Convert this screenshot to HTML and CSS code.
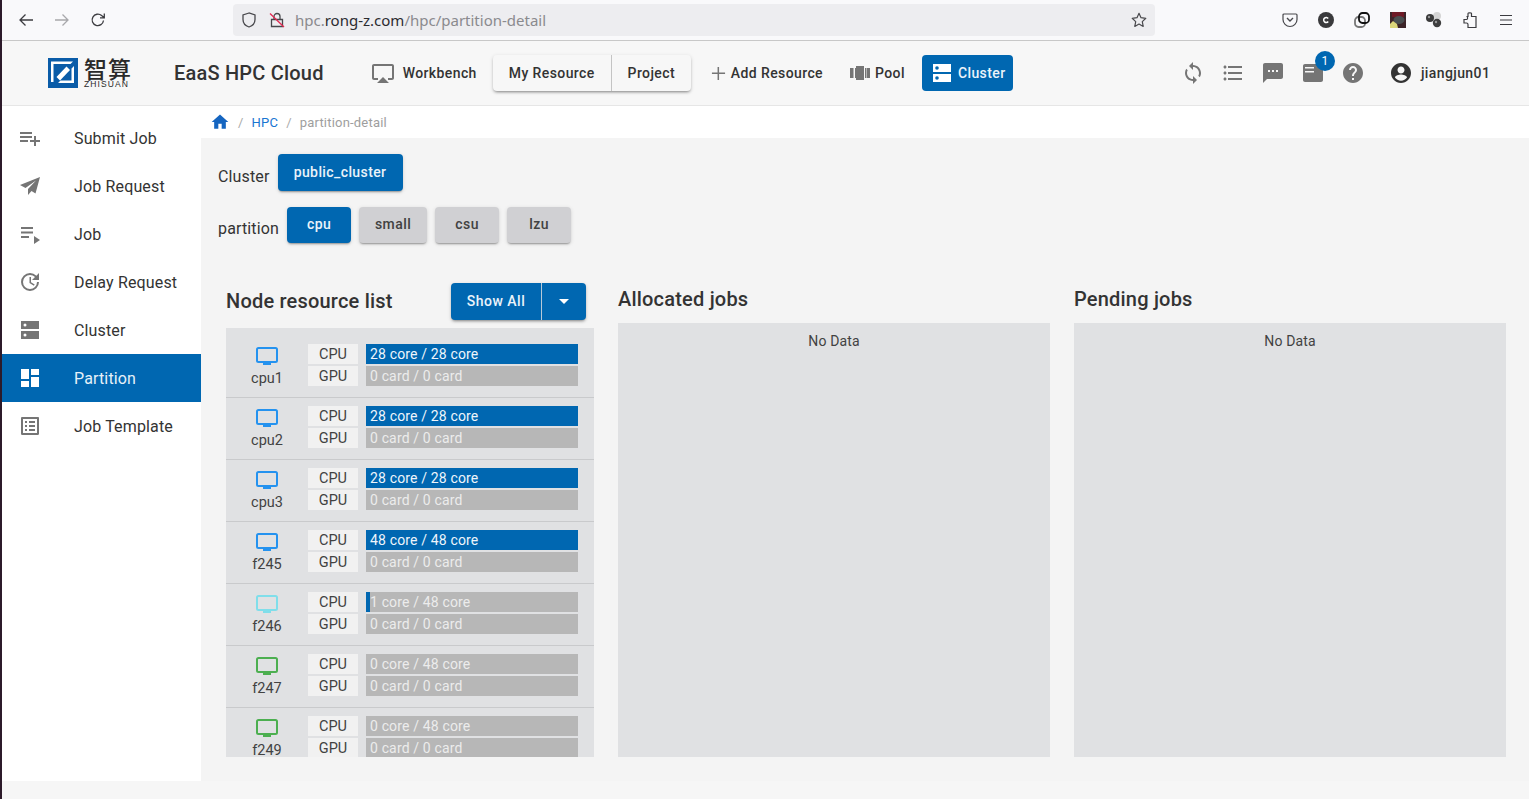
FILE: index.html
```html
<!DOCTYPE html>
<html lang="en">
<head>
    <meta charset="UTF-8">
    <meta name="viewport" content="width=device-width, initial-scale=1.0">
    <title>EaaS HPC Cloud</title>
    <link rel="stylesheet" href="styles.css">
</head>
<body>

<div class="browser-bar">
    <div class="browser-nav">
        <svg class="b-icon" viewBox="0 0 16 16"><path d="M15 8H2M7.500 2.500 2 8l5.500 5.500" fill="none" stroke="#3c3c40" stroke-width="1.300"/></svg>
        <svg class="b-icon" viewBox="0 0 16 16"><path d="M1 8h13M8.500 2.500 14 8l-5.500 5.500" fill="none" stroke="#a8a8ab" stroke-width="1.300"/></svg>
        <svg class="b-icon" viewBox="0 0 16 16"><path d="M13.500 8.500A5.700 5.700 0 1 1 11.600 3.600L14 5.600M14.300 1.500v4.400H10" fill="none" stroke="#3c3c40" stroke-width="1.300"/></svg>
    </div>
    <div class="url-box">
        <svg class="url-icon" viewBox="0 0 16 16"><path d="M8 1 2 3v4.500C2 11.500 5 14 8 15c3-1 6-3.500 6-7.500V3z" fill="none" stroke="#48484c" stroke-width="1.300"/></svg>
        <svg class="url-icon lock" viewBox="0 0 16 16"><path d="M5 7V4.500a3 3 0 0 1 6 0V7M2.500 7.500h11v7h-11z" fill="none" stroke="#48484c" stroke-width="1.300"/><path d="M1 1.500 15 15" stroke="#e22850" stroke-width="1.300"/></svg>
        <span class="url-text">hpc.<b>rong-z.com</b>/hpc/partition-detail</span>
        <svg class="url-star" viewBox="0 0 16 16"><path d="m8 1.300 2 4.400 4.800.6-3.500 3.300.9 4.800L8 12l-4.200 2.400.9-4.800L1.200 6.300 6 5.700z" fill="none" stroke="#48484c" stroke-width="1.200" stroke-linejoin="round"/></svg>
    </div>
    <div class="browser-ext">
        <svg class="b-icon" viewBox="0 0 16 16"><path d="M2 2h12a1 1 0 0 1 1 1v4.500a7 7 0 0 1-14 0V3a1 1 0 0 1 1-1z" fill="none" stroke="#48484c" stroke-width="1.200"/><path d="m5 6 3 3 3-3" fill="none" stroke="#48484c" stroke-width="1.400"/></svg>
        <svg class="b-icon" viewBox="0 0 16 16"><circle cx="8" cy="8" r="8" fill="#3a3a3c"/><path d="M10.200 6.500a2.500 2.500 0 1 0 0 3" fill="none" stroke="#fff" stroke-width="1.500"/></svg>
        <svg class="b-icon" viewBox="0 0 16 16"><rect x="1" y="5" width="10" height="10" rx="3.500" fill="none" stroke="#777" stroke-width="1.800"/><rect x="5" y="1" width="10" height="10" rx="3.500" fill="none" stroke="#111" stroke-width="1.800"/></svg>
        <svg class="b-icon" viewBox="0 0 16 16"><rect width="16" height="16" fill="#3c2428"/><rect x="2" y="0" width="12" height="5" fill="#6e1a26"/><ellipse cx="9" cy="8" rx="5.500" ry="4" fill="#4a4f50"/><path d="M0 16V12l3-3 4 3 1 4z" fill="#dcd67a"/></svg>
        <svg class="b-icon" viewBox="0 0 16 16"><circle cx="11" cy="4" r="4" fill="#d4d4d4"/><circle cx="4" cy="6" r="4" fill="#3a3a3a"/><circle cx="11" cy="11" r="4.200" fill="#3f3f3f"/><circle cx="3" cy="5" r="1.200" fill="#999"/><circle cx="10" cy="10" r="1.200" fill="#999"/></svg>
        <svg class="b-icon" viewBox="0 0 16 16"><path d="M6 1.500c0-1 3.500-1 3.500 0V4.500h4.500v11H6v-3c0-1-.5-1.500-1.500-1.500H2V7.500h2.500C6 7.500 6 4.500 4.500 4.500H6z" fill="none" stroke="#3c3c40" stroke-width="1.200"/></svg>
        <svg class="b-icon" viewBox="0 0 16 16"><path d="M2 3.500h12M2 8h12M2 12.500h12" stroke="#3c3c40" stroke-width="1.200"/></svg>
    </div>
</div>

<header class="app-header">
    <div class="logo">
        <svg class="logo-mark" viewBox="0 0 30 30">
            <rect width="30" height="30" fill="#0a5ca8"/>
            <path d="M3 3.500h22L22.500 6h-17v18H3zM26 8v17H10l2.500-2.500h11V10.500z" fill="#fff"/>
            <path d="m8.500 19 10-10.500L22 12 12 22.500z" fill="#fff"/>
        </svg>
        <div class="logo-text">
            <span class="logo-cn">智算</span>
            <span class="logo-en">ZHISUAN</span>
        </div>
    </div>
    <div class="app-title">EaaS HPC Cloud</div>
    <nav class="top-nav">
        <a class="nav-item nav-workbench">
            <svg class="nav-icon" viewBox="0 0 24 24"><path d="M6 22h12l-6-6zM21 3H3c-1.100 0-2 .9-2 2v12c0 1.100.9 2 2 2h4v-2H3V5h18v12h-4v2h4c1.100 0 2-.9 2-2V5c0-1.100-.9-2-2-2z"/></svg>
            Workbench
        </a>
        <div class="nav-group">
            <a class="group-item group-first">My Resource</a>
            <a class="group-item group-last">Project</a>
        </div>
        <a class="nav-item nav-add">
            <svg class="nav-icon plus" viewBox="0 0 16 16"><path d="M7 1h1.600v6H15v1.600H8.600V15H7V8.600H1V7h6z"/></svg>
            Add Resource
        </a>
        <a class="nav-item nav-pool">
            <svg class="nav-icon pool" viewBox="0 0 20 14"><path d="M0 2h3.500v10H0zM5 2h1v10H5zM6 0h8v14H6zM15 2h1v10h-1zM16.500 2H20v10h-3.500z"/></svg>
            Pool
        </a>
        <a class="nav-item nav-active">
            <svg class="nav-icon server" viewBox="0 0 18 18"><path d="M0 0h18v8H0zm0 10h18v8H0z" fill="#fff"/><circle cx="4" cy="4" r="1.800" fill="#0067b1"/><circle cx="4" cy="14" r="1.800" fill="#0067b1"/></svg>
            Cluster
        </a>
    </nav>
    <div class="header-tools">
        <svg class="tool-icon" viewBox="0 0 24 24"><path d="M12 4V1L8 5l4 4V6c3.310 0 6 2.690 6 6 0 1.010-.25 1.970-.7 2.800l1.460 1.460C19.540 15.030 20 13.570 20 12c0-4.420-3.580-8-8-8zm0 14c-3.310 0-6-2.690-6-6 0-1.010.25-1.970.7-2.800L5.240 7.740C4.460 8.970 4 10.430 4 12c0 4.420 3.580 8 8 8v3l4-4-4-4v3z"/></svg>
        <svg class="tool-icon" viewBox="0 0 24 24"><path d="M4 10.500c-.83 0-1.500.67-1.500 1.500s.67 1.500 1.500 1.500 1.500-.67 1.500-1.500-.67-1.500-1.500-1.500zm0-6c-.83 0-1.500.67-1.500 1.500S3.170 7.500 4 7.500 5.500 6.830 5.500 6 4.830 4.500 4 4.500zm0 12c-.83 0-1.500.68-1.500 1.500s.68 1.500 1.500 1.500 1.500-.68 1.500-1.500-.67-1.500-1.500-1.500zM7 19h14v-2H7v2zm0-6h14v-2H7v2zm0-8v2h14V5H7z"/></svg>
        <svg class="tool-icon" viewBox="0 0 24 24"><path d="M20 2H4c-1.100 0-1.990.9-1.990 2L2 22l4-4h14c1.100 0 2-.9 2-2V4c0-1.100-.9-2-2-2zM9 11H7V9h2v2zm4 0h-2V9h2v2zm4 0h-2V9h2v2z"/></svg>
        <div class="tool-badge-wrap">
            <svg class="tool-icon" viewBox="0 0 24 24"><path fill-rule="evenodd" d="M4 3h16c1.100 0 2 .9 2 2v14c0 1.100-.9 2-2 2H4c-1.100 0-2-.9-2-2V5c0-1.100.9-2 2-2zm0 3v1.500h9V6zm0 4v1.500h9V10z"/></svg>
            <span class="badge">1</span>
        </div>
        <svg class="tool-icon" viewBox="0 0 24 24"><path d="M12 2C6.480 2 2 6.480 2 12s4.480 10 10 10 10-4.480 10-10S17.520 2 12 2zm1 17h-2v-2h2v2zm2.070-7.750-.9.920C13.450 12.900 13 13.500 13 15h-2v-.5c0-1.100.45-2.100 1.170-2.830l1.240-1.260c.37-.36.590-.86.590-1.410 0-1.100-.9-2-2-2s-2 .9-2 2H8c0-2.210 1.790-4 4-4s4 1.790 4 4c0 .88-.36 1.680-.93 2.250z"/></svg>
    </div>
    <div class="user-box">
        <svg class="user-icon" viewBox="0 0 24 24"><path d="M12 2C6.480 2 2 6.480 2 12s4.480 10 10 10 10-4.480 10-10S17.520 2 12 2zm0 3.500c1.930 0 3.500 1.570 3.500 3.500s-1.570 3.500-3.500 3.500S8.500 10.930 8.500 9s1.570-3.500 3.500-3.500zm0 14.200c-2.500 0-4.710-1.280-6-3.220.03-1.990 4-3.080 6-3.080s5.970 1.090 6 3.080c-1.290 1.940-3.500 3.220-6 3.220z"/></svg>
        jiangjun01
    </div>
</header>

<div class="main">
    <aside class="sidebar">
        <a class="side-item">
            <svg class="side-icon" viewBox="0 0 24 24"><path d="M14 10H2v2h12v-2zm0-4H2v2h12V6zm4 8v-4h-2v4h-4v2h4v4h2v-4h4v-2h-4zM2 16h8v-2H2v2z"/></svg>
            Submit Job
        </a>
        <a class="side-item">
            <svg class="side-icon" viewBox="0 0 24 24"><path d="M22 3 2 11l5.500 3L18 6.500 10 15v6l3.500-4 4 2.500z"/></svg>
            Job Request
        </a>
        <a class="side-item">
            <svg class="side-icon" viewBox="0 0 24 24"><path d="M3 5h12v2H3zM3 9.500h12v2H3zM3 14h8v2H3zM16 14l6 4-6 4z"/></svg>
            Job
        </a>
        <a class="side-item">
            <svg class="side-icon" viewBox="0 0 24 24"><path d="M11.500 7H13v5.200l3.700 2.200-.8 1.300-4.400-2.700zM21 10.100V3l-2.600 2.700A9.900 9.900 0 0 0 12 3a9 9 0 1 0 9 9h-2a7 7 0 1 1-7-7c1.900 0 3.700.8 5 2l-3 3z"/></svg>
            Delay Request
        </a>
        <a class="side-item">
            <svg class="side-icon" viewBox="0 0 24 24"><path fill-rule="evenodd" d="M3 3h18v8H3zm0 10h18v8H3zM7 5.500a1.500 1.500 0 1 0 0 3 1.500 1.500 0 0 0 0-3zm0 10a1.500 1.500 0 1 0 0 3 1.500 1.500 0 0 0 0-3z"/></svg>
            Cluster
        </a>
        <a class="side-item side-active">
            <svg class="side-icon" viewBox="0 0 24 24"><path d="M3 13h8V3H3v10zm0 8h8v-6H3v6zm10 0h8V11h-8v10zm0-18v6h8V3h-8z"/></svg>
            Partition
        </a>
        <a class="side-item">
            <svg class="side-icon" viewBox="0 0 24 24"><path d="M19 5v14H5V5h14m1.100-2H3.900c-.5 0-.9.400-.9.900v16.200c0 .4.400.9.900.9h16.200c.4 0 .9-.5.9-.9V3.900c0-.5-.5-.9-.9-.9zM11 7h6v2h-6V7zm0 4h6v2h-6v-2zm0 4h6v2h-6zM7 7h2v2H7zm0 4h2v2H7zm0 4h2v2H7z"/></svg>
            Job Template
        </a>
    </aside>

    <div class="content">
        <div class="breadcrumb">
            <svg class="home-icon" viewBox="0 0 24 24"><path d="M10 20v-6h4v6h5v-8h3L12 3 2 12h3v8z"/></svg>
            <span class="crumb-sep">/</span>
            <a class="crumb-link">HPC</a>
            <span class="crumb-sep">/</span>
            <span class="crumb-now">partition-detail</span>
        </div>

        <div class="filters">
            <div class="filter-row">
                <span class="filter-label label-cluster">Cluster</span>
                <button class="btn btn-cluster btn-on">public_cluster</button>
            </div>
            <div class="filter-row row-partition">
                <span class="filter-label">partition</span>
                <button class="btn btn-part btn-on">cpu</button>
                <button class="btn btn-part">small</button>
                <button class="btn btn-part">csu</button>
                <button class="btn btn-part">lzu</button>
            </div>
        </div>

        <div class="panels">
            <section class="panel-nodes">
                <div class="nodes-head">
                    <h2 class="panel-title">Node resource list</h2>
                    <div class="split-btn">
                        <span class="split-main">Show All</span>
                        <span class="split-arrow"><i class="caret"></i></span>
                    </div>
                </div>
                <div class="node-list">
                    <div class="node-row">
                        <div class="node-name"><svg class="monitor full" viewBox="0 0 22 18"><rect x="1" y="1" width="20" height="14" rx="1.500"/><path class="foot" d="M7 16h8v2H7z"/></svg>cpu1</div>
                        <div class="node-bars">
                            <div class="bar-line"><span class="bar-tag">CPU</span><div class="bar"><div class="bar-fill" style="width:100%"></div><span class="bar-text on">28 core / 28 core</span></div></div>
                            <div class="bar-line"><span class="bar-tag">GPU</span><div class="bar"><span class="bar-text">0 card / 0 card</span></div></div>
                        </div>
                    </div>
                    <div class="node-row">
                        <div class="node-name"><svg class="monitor full" viewBox="0 0 22 18"><rect x="1" y="1" width="20" height="14" rx="1.500"/><path class="foot" d="M7 16h8v2H7z"/></svg>cpu2</div>
                        <div class="node-bars">
                            <div class="bar-line"><span class="bar-tag">CPU</span><div class="bar"><div class="bar-fill" style="width:100%"></div><span class="bar-text on">28 core / 28 core</span></div></div>
                            <div class="bar-line"><span class="bar-tag">GPU</span><div class="bar"><span class="bar-text">0 card / 0 card</span></div></div>
                        </div>
                    </div>
                    <div class="node-row">
                        <div class="node-name"><svg class="monitor full" viewBox="0 0 22 18"><rect x="1" y="1" width="20" height="14" rx="1.500"/><path class="foot" d="M7 16h8v2H7z"/></svg>cpu3</div>
                        <div class="node-bars">
                            <div class="bar-line"><span class="bar-tag">CPU</span><div class="bar"><div class="bar-fill" style="width:100%"></div><span class="bar-text on">28 core / 28 core</span></div></div>
                            <div class="bar-line"><span class="bar-tag">GPU</span><div class="bar"><span class="bar-text">0 card / 0 card</span></div></div>
                        </div>
                    </div>
                    <div class="node-row">
                        <div class="node-name"><svg class="monitor full" viewBox="0 0 22 18"><rect x="1" y="1" width="20" height="14" rx="1.500"/><path class="foot" d="M7 16h8v2H7z"/></svg>f245</div>
                        <div class="node-bars">
                            <div class="bar-line"><span class="bar-tag">CPU</span><div class="bar"><div class="bar-fill" style="width:100%"></div><span class="bar-text on">48 core / 48 core</span></div></div>
                            <div class="bar-line"><span class="bar-tag">GPU</span><div class="bar"><span class="bar-text">0 card / 0 card</span></div></div>
                        </div>
                    </div>
                    <div class="node-row">
                        <div class="node-name"><svg class="monitor some" viewBox="0 0 22 18"><rect x="1" y="1" width="20" height="14" rx="1.500"/><path class="foot" d="M7 16h8v2H7z"/></svg>f246</div>
                        <div class="node-bars">
                            <div class="bar-line"><span class="bar-tag">CPU</span><div class="bar"><div class="bar-fill" style="width:2%"></div><span class="bar-text">1 core / 48 core</span></div></div>
                            <div class="bar-line"><span class="bar-tag">GPU</span><div class="bar"><span class="bar-text">0 card / 0 card</span></div></div>
                        </div>
                    </div>
                    <div class="node-row">
                        <div class="node-name"><svg class="monitor idle" viewBox="0 0 22 18"><rect x="1" y="1" width="20" height="14" rx="1.500"/><path class="foot" d="M7 16h8v2H7z"/></svg>f247</div>
                        <div class="node-bars">
                            <div class="bar-line"><span class="bar-tag">CPU</span><div class="bar"><span class="bar-text">0 core / 48 core</span></div></div>
                            <div class="bar-line"><span class="bar-tag">GPU</span><div class="bar"><span class="bar-text">0 card / 0 card</span></div></div>
                        </div>
                    </div>
                    <div class="node-row">
                        <div class="node-name"><svg class="monitor idle" viewBox="0 0 22 18"><rect x="1" y="1" width="20" height="14" rx="1.500"/><path class="foot" d="M7 16h8v2H7z"/></svg>f249</div>
                        <div class="node-bars">
                            <div class="bar-line"><span class="bar-tag">CPU</span><div class="bar"><span class="bar-text">0 core / 48 core</span></div></div>
                            <div class="bar-line"><span class="bar-tag">GPU</span><div class="bar"><span class="bar-text">0 card / 0 card</span></div></div>
                        </div>
                    </div>
                </div>
            </section>

            <section class="panel-jobs">
                <h2 class="panel-title">Allocated jobs</h2>
                <div class="jobs-box">No Data</div>
            </section>

            <section class="panel-jobs">
                <h2 class="panel-title">Pending jobs</h2>
                <div class="jobs-box">No Data</div>
            </section>
        </div>
    </div>
</div>

</body>
</html>
```

FILE: styles.css
```css
* {
    box-sizing: border-box;
}
html, body {
    height: 100%;
}
body {
    margin: 0;
    height: 799px;
    overflow: hidden;
    border-left: 2px solid #2c1a2a;
    background-color: #f6f6f6;
    font-family: Roboto, "Noto Sans", sans-serif;
    color: #333;
}

/* browser chrome */
.browser-bar {
    display: flex;
    align-items: center;
    height: 41px;
    border-bottom: 1px solid #c8c8c8;
    background-color: #f9f9fb;
}
.browser-nav {
    display: flex;
    gap: 20px;
    width: 231px;
    padding-left: 16px;
}
.b-icon {
    width: 16px;
    height: 16px;
    display: block;
}
.url-box {
    display: flex;
    align-items: center;
    width: 922px;
    height: 32px;
    padding: 0 8px;
    border-radius: 4px;
    background-color: #ededf0;
}
.url-icon {
    width: 16px;
    height: 16px;
}
.url-icon.lock {
    margin-left: 12px;
}
.url-text {
    margin-left: 10px;
    font-family: "Noto Sans", sans-serif;
    font-size: 15px;
    color: #8a8a8e;
}
.url-text b {
    font-weight: 400;
    color: #2b2b30;
}
.url-star {
    width: 16px;
    height: 16px;
    margin-left: auto;
}
.browser-ext {
    display: flex;
    gap: 20px;
    margin-left: 127px;
}

/* app header */
.app-header {
    display: flex;
    align-items: center;
    height: 65px;
    border-bottom: 1px solid #e6e6e6;
    background-color: #f7f7f7;
}
.logo {
    display: flex;
    align-items: center;
    margin-left: 46px;
}
.logo-mark {
    width: 30px;
    height: 30px;
}
.logo-text {
    display: flex;
    flex-direction: column;
    margin-left: 6px;
    color: #2a2a2a;
}
.logo-cn {
    font-family: "Noto Sans CJK SC", sans-serif;
    font-size: 23px;
    line-height: 20px;
    font-weight: 500;
    letter-spacing: 1px;
}
.logo-en {
    margin-top: 2px;
    font-family: "Liberation Sans", sans-serif;
    font-size: 8.500px;
    line-height: 8px;
    letter-spacing: 1.100px;
    white-space: nowrap;
}
.app-title {
    margin-left: 42px;
    font-size: 20px;
    font-weight: 500;
    letter-spacing: .2px;
    color: #333;
}
.top-nav {
    display: flex;
    align-items: center;
    margin-left: 47px;
    font-size: 14px;
    font-weight: 500;
    letter-spacing: .4px;
}
.nav-item {
    display: flex;
    align-items: center;
    height: 36px;
    color: #333;
}
.nav-icon {
    width: 24px;
    height: 24px;
    margin-right: 8px;
    fill: #757575;
}
.nav-icon.plus {
    width: 15px;
    height: 15px;
    margin-right: 5px;
}
.nav-icon.pool {
    width: 20px;
    height: 14px;
    margin-right: 5px;
}
.nav-icon.server {
    width: 18px;
    height: 18px;
    margin-right: 7px;
}
.nav-group {
    display: flex;
    height: 36px;
    margin-left: 16px;
    border-radius: 4px;
    background-color: #f7f7f7;
    box-shadow: 0 2px 3px -1px rgba(0, 0, 0, .4), 0 1px 4px rgba(0, 0, 0, .12);
}
.group-item {
    display: flex;
    align-items: center;
    justify-content: center;
    color: #333;
}
.group-first {
    width: 119px;
    border-right: 1px solid #c4c4c4;
}
.group-last {
    width: 79px;
}
.nav-add {
    margin-left: 20px;
}
.nav-pool {
    margin-left: 27px;
}
.nav-active {
    margin-left: 17px;
    width: 91px;
    padding-left: 11px;
    border-radius: 4px;
    background-color: #0067b1;
    color: #eaf3fa;
}
.header-tools {
    display: flex;
    align-items: center;
    gap: 16px;
    margin-left: 168px;
}
.tool-icon {
    display: block;
    width: 24px;
    height: 24px;
    fill: #757575;
}
.tool-badge-wrap {
    position: relative;
}
.badge {
    position: absolute;
    top: -10px;
    left: 14px;
    width: 20px;
    height: 20px;
    border-radius: 50%;
    background-color: #0067b1;
    color: #fff;
    font-size: 12px;
    line-height: 20px;
    text-align: center;
}
.user-box {
    display: flex;
    align-items: center;
    margin-left: 24px;
    font-size: 14px;
    font-weight: 500;
    letter-spacing: .4px;
    color: #333;
}
.user-icon {
    width: 24px;
    height: 24px;
    margin-right: 8px;
    fill: #333;
}

/* page */
.main {
    display: flex;
    height: 675px;
}
.sidebar {
    width: 199px;
    padding-top: 8px;
    background-color: #fff;
}
.side-item {
    display: flex;
    align-items: center;
    height: 48px;
    padding-left: 16px;
    font-size: 16px;
    letter-spacing: .15px;
    color: #333;
}
.side-icon {
    width: 24px;
    height: 24px;
    margin-right: 32px;
    fill: #757575;
}
.side-active {
    background-color: #0067b1;
    color: #e6f1f9;
}
.side-active .side-icon {
    fill: #fff;
}
.content {
    flex: 1;
    background-color: #f4f4f4;
}
.breadcrumb {
    display: flex;
    align-items: center;
    height: 32px;
    padding-left: 9px;
    background-color: #fff;
    font-size: 13px;
    letter-spacing: .2px;
}
.home-icon {
    width: 20px;
    height: 20px;
    fill: #1565c0;
}
.crumb-sep {
    margin: 0 8px 0 8px;
    color: #aaa;
}
.crumb-link {
    color: #1976d2;
}
.crumb-now {
    color: #9e9e9e;
}
.filters {
    padding: 16px 0 0 17px;
}
.filter-row {
    display: flex;
    align-items: center;
    gap: 8px;
    height: 37px;
}
.row-partition {
    height: 36px;
    margin-top: 16px;
}
.filter-label {
    margin-top: 6px;
    font-size: 16px;
    letter-spacing: .15px;
    color: #333;
}
.label-cluster {
    margin-top: 8px;
}
.btn {
    height: 36px;
    padding: 0 0 2px;
    border: 0;
    border-radius: 4px;
    background-color: #d0d0d3;
    box-shadow: 0 2px 2px -1px rgba(0, 0, 0, .35), 0 1px 4px rgba(0, 0, 0, .12);
    font-family: Roboto, sans-serif;
    font-size: 14px;
    font-weight: 500;
    letter-spacing: .4px;
    color: #424242;
}
.btn-on {
    background-color: #0067b1;
    color: #eaf3fa;
}
.btn-cluster {
    width: 125px;
    height: 37px;
}
.btn-part {
    width: 64px;
}
.btn-part:nth-child(3) {
    width: 68px;
}

/* three panels */
.panels {
    display: flex;
    margin-top: 40px;
    padding-left: 25px;
}
.panel-nodes {
    width: 368px;
}
.panel-jobs {
    width: 432px;
    margin-left: 24px;
}
.panel-title {
    margin: 0;
    font-size: 20px;
    line-height: 32px;
    font-weight: 500;
    letter-spacing: .2px;
    color: #333;
}
.nodes-head {
    display: flex;
    align-items: center;
    justify-content: space-between;
    height: 37px;
    margin-bottom: 8px;
    padding-right: 8px;
}
.nodes-head .panel-title {
    margin-top: -1px;
}
.split-btn {
    display: flex;
    height: 37px;
    border-radius: 4px;
    background-color: #0067b1;
    box-shadow: 0 2px 3px -1px rgba(0, 0, 0, .4), 0 1px 4px rgba(0, 0, 0, .12);
    color: #eaf3fa;
    font-size: 14px;
    font-weight: 500;
    letter-spacing: .5px;
}
.split-main {
    display: flex;
    align-items: center;
    justify-content: center;
    width: 91px;
    padding-bottom: 1px;
    border-right: 1px solid #b7c9d8;
}
.split-arrow {
    display: flex;
    align-items: center;
    justify-content: center;
    width: 44px;
}
.caret {
    width: 0;
    height: 0;
    border-left: 5px solid transparent;
    border-right: 5px solid transparent;
    border-top: 5px solid #fff;
}
.node-list {
    height: 429px;
    padding-top: 8px;
    overflow: hidden;
    background-color: #e0e1e3;
}
.node-row {
    display: flex;
    height: 62px;
    padding: 8px 16px 0 0;
    border-bottom: 1px solid #c9cacc;
}
.node-name {
    display: flex;
    flex-direction: column;
    align-items: center;
    width: 82px;
    font-size: 14.500px;
    line-height: 20px;
    color: #424242;
}
.monitor {
    width: 22px;
    height: 18px;
    margin: 3px 0 4px;
}
.monitor rect {
    fill: none;
    stroke-width: 2;
}
.monitor.full rect { stroke: #2492ef; }
.monitor.full .foot { fill: #2492ef; }
.monitor.some rect { stroke: #80deea; }
.monitor.some .foot { fill: #80deea; }
.monitor.idle rect { stroke: #4caf50; }
.monitor.idle .foot { fill: #4caf50; }
.node-bars {
    display: flex;
    flex-direction: column;
    gap: 2px;
    flex: 1;
}
.bar-line {
    display: flex;
    gap: 8px;
    height: 20px;
}
.bar-tag {
    width: 50px;
    padding-top: 1px;
    background-color: #f1f1f1;
    font-size: 14.500px;
    line-height: 20px;
    text-align: center;
    color: #424242;
}
.bar {
    position: relative;
    flex: 1;
    background-color: #b7b7b7;
}
.bar-fill {
    position: absolute;
    top: 0;
    left: 0;
    height: 100%;
    background-color: #0067b1;
}
.bar-text {
    position: absolute;
    left: 4px;
    top: 0;
    font-size: 14px;
    line-height: 20px;
    letter-spacing: .15px;
    color: #ececec;
}
.bar-text.on {
    color: #eef5fb;
}
.panel-jobs .panel-title {
    margin-bottom: 8px;
    line-height: 32px;
}
.jobs-box {
    height: 434px;
    padding-top: 10px;
    background-color: #e0e1e3;
    font-size: 14px;
    line-height: 16px;
    letter-spacing: .15px;
    text-align: center;
    color: #424242;
}
```
